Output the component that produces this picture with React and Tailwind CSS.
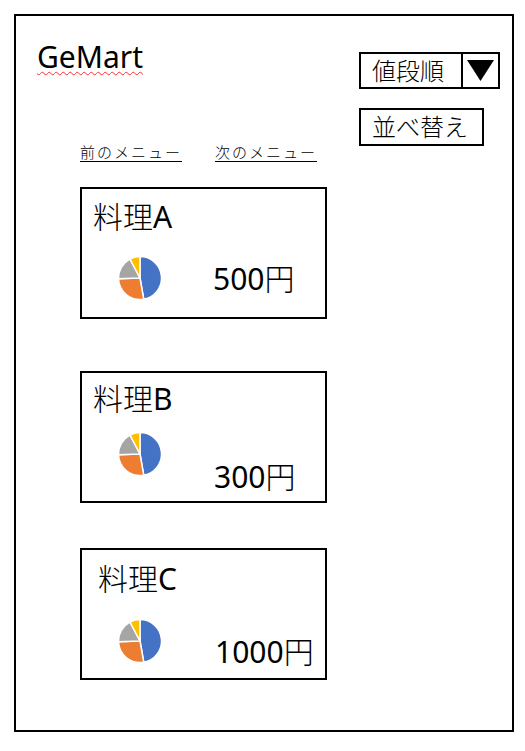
import React from "react";

const FONT = { fontFamily: '"Noto Sans", "Noto Sans CJK JP", sans-serif' };

// スライス（時計回り、12時方向から）
const SLICES = [
  { from: 0, to: 170, color: "#4472C4" },
  { from: 170, to: 268, color: "#ED7D31" },
  { from: 268, to: 332, color: "#A5A5A5" },
  { from: 332, to: 360, color: "#FFC000" },
];

function arc(cx, cy, r, a0, a1) {
  const p = (a) => {
    const rad = ((a - 90) * Math.PI) / 180;
    return [cx + r * Math.cos(rad), cy + r * Math.sin(rad)];
  };
  const [x0, y0] = p(a0);
  const [x1, y1] = p(a1);
  const large = a1 - a0 > 180 ? 1 : 0;
  return `M${cx} ${cy} L${x0} ${y0} A${r} ${r} 0 ${large} 1 ${x1} ${y1} Z`;
}

function Pie() {
  return (
    <svg width="44" height="44" viewBox="0 0 44 44">
      {SLICES.map((s) => (
        <path
          key={s.color}
          d={arc(22, 22, 21.5, s.from, s.to)}
          fill={s.color}
          stroke="#fff"
          strokeWidth="1.5"
          strokeLinejoin="round"
        />
      ))}
    </svg>
  );
}

const DISHES = [
  {
    kana: "料理",
    letter: "A",
    amount: "500",
    card: "mt-[25px]",
    title: "ml-[11px] mt-[10px]",
    pie: "ml-[36px] mt-[21px]",
    priceCls: "ml-[51px] mt-[26px]",
  },
  {
    kana: "料理",
    letter: "B",
    amount: "300",
    card: "mt-[52px]",
    title: "ml-[11px] mt-[8px]",
    pie: "ml-[36px] mt-[15px]",
    priceCls: "ml-[52px] mt-[42px]",
  },
  {
    kana: "料理",
    letter: "C",
    amount: "1000",
    card: "mt-[45px]",
    title: "ml-[16px] mt-[11px]",
    pie: "ml-[36px] mt-[22px]",
    priceCls: "ml-[53px] mt-[37px]",
  },
];

function DishCard({ dish }) {
  return (
    <div className={`ml-[64px] flex h-[132px] w-[247px] flex-col border-2 border-black ${dish.card}`}>
      <div className={`text-[30px] leading-[36px] ${dish.title}`}>
        <span className="font-light">{dish.kana}</span>
        {dish.letter}
      </div>
      <div className="flex items-start">
        <div className={dish.pie}>
          <Pie />
        </div>
        <div className={`text-[30px] leading-[36px] ${dish.priceCls}`}>
          {dish.amount}
          <span className="font-light">円</span>
        </div>
      </div>
    </div>
  );
}

export default function App() {
  return (
    <div className="min-h-screen bg-white p-[14px] text-black" style={FONT}>
      <div className="flex h-[718px] w-[500px] border-2 border-black">
        {/* ── 左カラム ── */}
        <div className="flex flex-1 flex-col">
          <div className="ml-[21px] mt-[26px] w-fit text-[30px] leading-[30px] underline decoration-red-500 decoration-wavy decoration-1 underline-offset-[3px]">
            GeMart
          </div>

          <nav className="ml-[64px] mt-[70px] flex gap-[33px] text-[15px] font-light leading-[20px] tracking-[2px]">
            <a href="#" className="underline decoration-1 underline-offset-[3px]">前のメニュー</a>
            <a href="#" className="underline decoration-1 underline-offset-[3px]">次のメニュー</a>
          </nav>

          {DISHES.map((d) => (
            <DishCard key={d.letter} dish={d} />
          ))}
        </div>

        {/* ── 右カラム ── */}
        <div className="flex w-[153px] flex-col items-start gap-[19px] pt-[36px]">
          <div className="flex h-[37px] w-[141px] items-stretch border-2 border-black">
            <div className="flex flex-1 items-center pl-[11px] text-[24px] font-light leading-none">値段順</div>
            <div className="flex w-[37px] items-center justify-center border-l-2 border-black">
              <svg width="27" height="21" viewBox="0 0 27 21">
                <polygon points="0,0 27,0 13.5,21" fill="#000" />
              </svg>
            </div>
          </div>
          <button
            type="button"
            className="flex h-[38px] w-[125px] items-center border-2 border-black pl-[11px] text-[24px] font-light leading-none"
          >
            並べ替え
          </button>
        </div>
      </div>
    </div>
  );
}
